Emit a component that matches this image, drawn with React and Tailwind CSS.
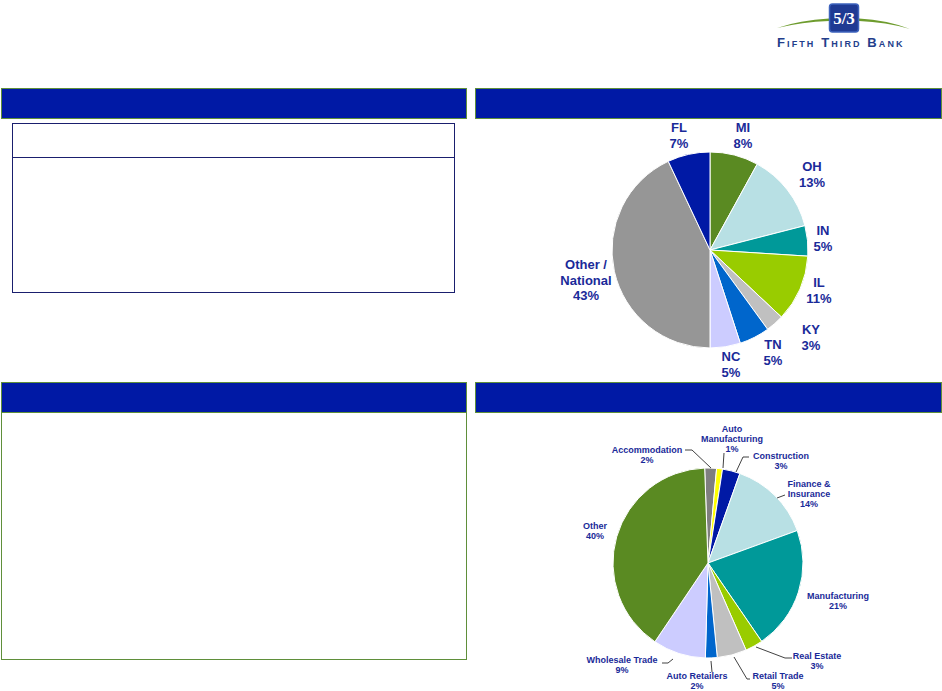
import React from "react";

/* Loan-portfolio slide: two blue section bars per row, an empty table box and
   text panel on the left, two pie charts on the right. Pie coordinates are
   written in page pixels; each svg's viewBox is offset to its own spot. */

const NAVY_TEXT = "#1a2a99";

const GEO = {
  cx: 710, cy: 249, r: 98, start: 0,
  slices: [
    { pct: 8, color: "#5a8a22" },
    { pct: 13, color: "#b8e0e4" },
    { pct: 5, color: "#009999" },
    { pct: 11, color: "#99cc00" },
    { pct: 3, color: "#c0c0c0" },
    { pct: 5, color: "#0066cc" },
    { pct: 5, color: "#ccccff" },
    { pct: 43, color: "#969696" },
    { pct: 7, color: "#0019a5" },
  ],
};

const GEO_LABELS = [
  { x: 679, y: 131, lines: ["FL", "7%"] },
  { x: 743, y: 131, lines: ["MI", "8%"] },
  { x: 812, y: 170, lines: ["OH", "13%"] },
  { x: 823, y: 234, lines: ["IN", "5%"] },
  { x: 819, y: 286, lines: ["IL", "11%"] },
  { x: 811, y: 333, lines: ["KY", "3%"] },
  { x: 773, y: 348, lines: ["TN", "5%"] },
  { x: 731, y: 360, lines: ["NC", "5%"] },
  { x: 586, y: 268, lines: ["Other /", "National", "43%"] },
];

const IND = {
  cx: 708, cy: 562, r: 95, start: -2,
  slices: [
    { pct: 2, color: "#7f7f7f" },
    { pct: 1, color: "#ffff00" },
    { pct: 3, color: "#0019a5" },
    { pct: 14, color: "#b8e0e4" },
    { pct: 21, color: "#009999" },
    { pct: 3, color: "#99cc00" },
    { pct: 5, color: "#c0c0c0" },
    { pct: 2, color: "#0066cc" },
    { pct: 9, color: "#ccccff" },
    { pct: 40, color: "#5a8a22" },
  ],
};

const IND_LABELS = [
  { x: 732, y: 431, lines: ["Auto", "Manufacturing", "1%"] },
  { x: 647, y: 452, lines: ["Accommodation", "2%"] },
  { x: 781, y: 458, lines: ["Construction", "3%"] },
  { x: 809, y: 486, lines: ["Finance &", "Insurance", "14%"] },
  { x: 595, y: 528, lines: ["Other", "40%"] },
  { x: 838, y: 598, lines: ["Manufacturing", "21%"] },
  { x: 817, y: 658, lines: ["Real Estate", "3%"] },
  { x: 778, y: 678, lines: ["Retail Trade", "5%"] },
  { x: 697, y: 678, lines: ["Auto Retailers", "2%"] },
  { x: 622, y: 662, lines: ["Wholesale Trade", "9%"] },
];

const LEADERS = [
  "M685,449 L692,449 L711,467",
  "M724,452 L723,467",
  "M749,456 L743,456 L736,471",
  "M785,494 L777,497",
  "M792,657 L785,657 L756,646",
  "M750,678 L747,678 L734,656",
  "M712,671 L711,660",
  "M662,662 L668,662 L673,658",
];

function pt(cx, cy, r, deg) {
  const a = (deg * Math.PI) / 180;
  return [cx + r * Math.sin(a), cy - r * Math.cos(a)];
}

function Pie({ cx, cy, r, start, slices }) {
  let a = start;
  return slices.map((s, i) => {
    const a0 = a;
    const a1 = a + s.pct * 3.6;
    a = a1;
    const [x0, y0] = pt(cx, cy, r, a0);
    const [x1, y1] = pt(cx, cy, r, a1);
    const large = a1 - a0 > 180 ? 1 : 0;
    return (
      <path key={i} d={`M${cx},${cy} L${x0},${y0} A${r},${r} 0 ${large} 1 ${x1},${y1} Z`}
        fill={s.color} stroke="#fff" strokeWidth="1" />
    );
  });
}

function Labels({ items, size, lh }) {
  return items.map((l, i) => (
    <text key={i} x={l.x} y={l.y} textAnchor="middle" fill={NAVY_TEXT} fontSize={size} fontWeight="700"
      fontFamily="'Liberation Sans', Arial, sans-serif">
      {l.lines.map((t, j) => (
        <tspan key={j} x={l.x} dy={j === 0 ? 0 : lh}>{t}</tspan>
      ))}
    </text>
  ));
}

function Bar() {
  return <div className="h-[31px] bg-[#0019a5] border border-[#5f8f3a]" />;
}

function Logo() {
  return (
    <div className="relative w-[140px] h-[50px]">
      <svg width="140" height="36" viewBox="770 0 140 36" className="absolute left-0 top-0">
        <path d="M775,28 Q798,20 827,18.5 L827,21 Q800,22 775,28 Z" fill="#6e9c2e" />
        <path d="M857,18.5 Q885,20 908,29 Q884,22 857,21 Z" fill="#6e9c2e" />
        <rect x="827.5" y="4" width="29" height="28" rx="3" fill="#1f3a93" stroke="#3e63bd" strokeWidth="1.5" />
        <text x="842" y="24" textAnchor="middle" fill="#fff" fontSize="17" fontWeight="700"
          fontFamily="'Liberation Serif', serif">5/3</text>
      </svg>
      <div className="absolute left-[5px] top-[36px] text-[13px] leading-none font-bold tracking-[2.1px] text-[#233e8b] [font-variant:small-caps] font-['Liberation_Sans',Arial,sans-serif] whitespace-nowrap">
        Fifth Third Bank
      </div>
    </div>
  );
}

export default function App() {
  return (
    <div className="w-[942px] h-[691px] bg-white overflow-hidden font-['Liberation_Sans',Arial,sans-serif]">
      <header className="h-[88px] flex justify-end pr-[30px]">
        <Logo />
      </header>

      <div className="flex pl-px gap-[8px]">
        {/* left column */}
        <div className="w-[466px] flex flex-col">
          <Bar />
          <div className="ml-[11px] mt-[4px] w-[443px] h-[170px] border-[1.5px] border-[#1a1f6e] flex flex-col">
            <div className="h-[34px] border-b-[1.5px] border-[#1a1f6e]" />
          </div>
          <div className="h-[89px]" />
          <Bar />
          <div className="h-[247px] border-[1.5px] border-t-0 border-[#5f8f3a]" />
        </div>

        {/* right column */}
        <div className="w-[467px] flex flex-col">
          <Bar />
          <svg width="467" height="263" viewBox="475 118 467 263" className="block">
            <Pie {...GEO} />
            <Labels items={GEO_LABELS} size={13} lh={15.5} />
          </svg>
          <Bar />
          <svg width="467" height="279" viewBox="475 412 467 279" className="block">
            <Pie {...IND} />
            <g stroke="#111" strokeWidth="0.8" fill="none">
              {LEADERS.map((d, i) => <path key={i} d={d} />)}
            </g>
            <Labels items={IND_LABELS} size={9} lh={10} />
          </svg>
        </div>
      </div>
    </div>
  );
}
